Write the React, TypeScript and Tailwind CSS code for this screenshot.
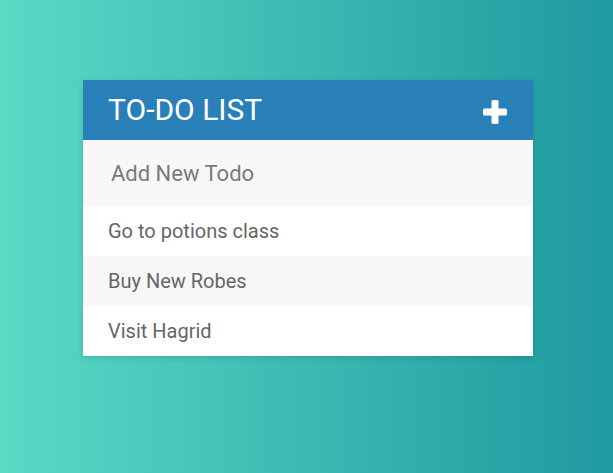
import React, { useState } from "react";

const todos = ["Go to potions class", "Buy New Robes", "Visit Hagrid"];

const PlusIcon: React.FC = () => (
  <svg width="24" height="24" viewBox="0 0 24 24" className="fill-white">
    <rect x="8.5" y="0" width="7" height="24" rx="1.5" />
    <rect x="0" y="8.5" width="24" height="7" rx="1.5" />
  </svg>
);

const App: React.FC = () => {
  const [text, setText] = useState("");

  return (
    <div
      className="min-h-[473px] w-full bg-[linear-gradient(to_right,#59dac5,#1f99a0)] pt-[80px]"
      style={{ fontFamily: "Roboto, 'Liberation Sans', sans-serif" }}
    >
      <div className="ml-[83px] w-[450px] bg-white shadow-[0_2px_6px_rgba(0,0,0,0.12)]">
        {/* header */}
        <div className="flex h-[60px] items-center justify-between bg-[#2980b9] pl-[25px] pr-[26px]">
          <h1 className="text-[30px] font-normal leading-none text-white">TO-DO LIST</h1>
          <button className="mt-[4px]">
            <PlusIcon />
          </button>
        </div>

        <input
          value={text}
          onChange={(e) => setText(e.target.value)}
          placeholder="Add New Todo"
          className="block h-[66px] w-full bg-[#f7f7f7] px-[28px] text-[22px] text-[#666] outline-none placeholder:text-[#7a7a7a]"
        />

        <ul>
          {todos.map((todo, i) => (
            <li
              key={todo}
              className={`flex h-[50px] items-center pl-[25px] text-[20px] text-[#666] ${
                i % 2 === 1 ? "bg-[#f7f7f7]" : "bg-white"
              }`}
            >
              {todo}
            </li>
          ))}
        </ul>
      </div>
    </div>
  );
};

export default App;
